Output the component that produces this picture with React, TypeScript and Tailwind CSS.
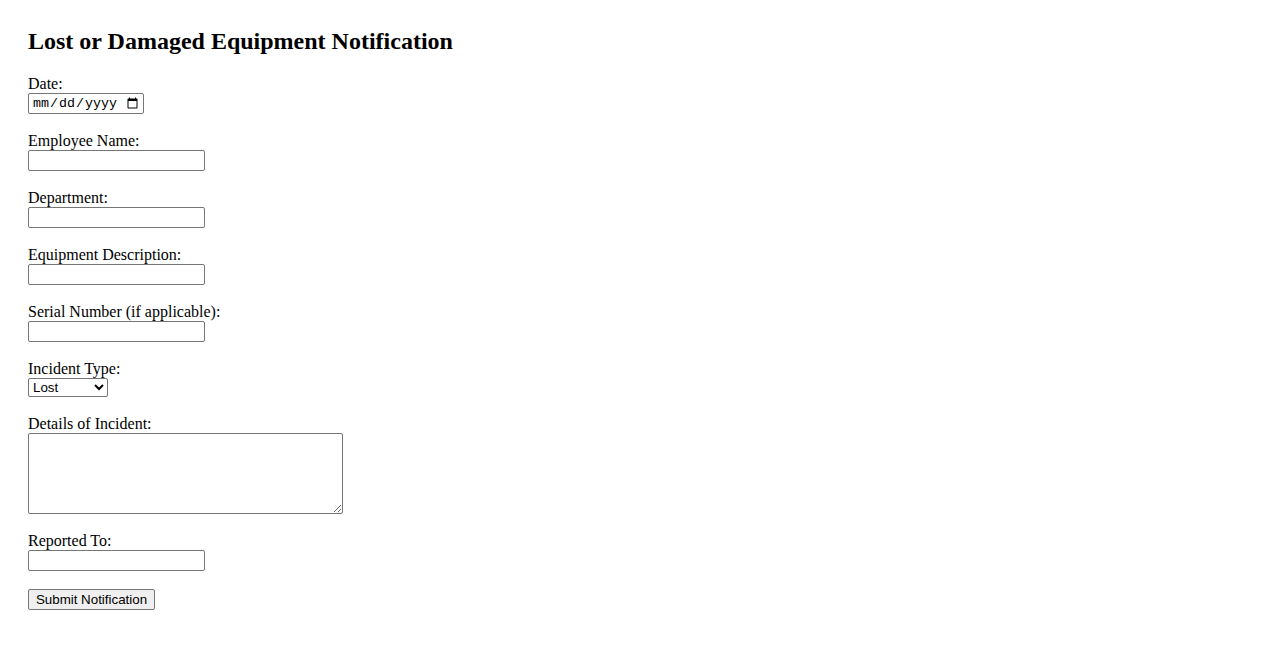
import { useState } from "react";

// simple field wrapper: label on one line, control underneath
function Field({ label, children }: { label: string; children: React.ReactNode }) {
  return (
    <div className="flex flex-col items-start mb-[17px]">
      <label className="block text-[16px] leading-[18px] pt-[1px]">{label}</label>
      {children}
    </div>
  );
}

const inputCls =
  "block w-[177px] h-[21px] border border-[#767676] rounded-[2px] bg-white px-[2px] text-[13.33px] font-['Liberation_Sans',Arial,sans-serif] outline-none";

export default function App() {
  const [type, setType] = useState("Lost");

  return (
    <div className="min-h-[650px] bg-white text-black font-['Liberation_Serif','Times_New_Roman',serif] px-[28px]">
      <h2 className="pt-[28px] mb-[20px] text-[24px] leading-[26px] font-bold">
        Lost or Damaged Equipment Notification
      </h2>

      <form onSubmit={(e) => e.preventDefault()} className="flex flex-col items-start">
        <Field label="Date:">
          <input
            type="date"
            className="block w-[116px] h-[21px] border border-[#767676] rounded-[2px] bg-white pl-[3px] pr-[2px] text-[13.33px] font-['Liberation_Mono',monospace]"
          />
        </Field>

        <Field label="Employee Name:">
          <input type="text" className={inputCls} />
        </Field>

        <Field label="Department:">
          <input type="text" className={inputCls} />
        </Field>

        <Field label="Equipment Description:">
          <input type="text" className={inputCls} />
        </Field>

        <Field label="Serial Number (if applicable):">
          <input type="text" className={inputCls} />
        </Field>

        <Field label="Incident Type:">
          <select
            value={type}
            onChange={(e) => setType(e.target.value)}
            className="block w-[80px] h-[19px] border border-[#767676] rounded-[2px] bg-white text-[13.33px] leading-[15px] font-['Liberation_Sans',Arial,sans-serif]"
          >
            <option>Lost</option>
            <option>Damaged</option>
          </select>
        </Field>

        <Field label="Details of Incident:">
          <textarea className="block w-[315px] h-[81px] border border-[#767676] rounded-[2px] bg-white p-[2px] text-[13.33px] font-['Liberation_Mono',monospace]" />
        </Field>

        <Field label="Reported To:">
          <input type="text" className={inputCls} />
        </Field>

        <button
          type="submit"
          className="block mt-[1px] h-[21px] w-[127px] border border-[#767676] rounded-[2px] bg-[#efefef] text-[13.33px] leading-[15px] font-['Liberation_Sans',Arial,sans-serif] text-black"
        >
          Submit Notification
        </button>
      </form>
    </div>
  );
}
